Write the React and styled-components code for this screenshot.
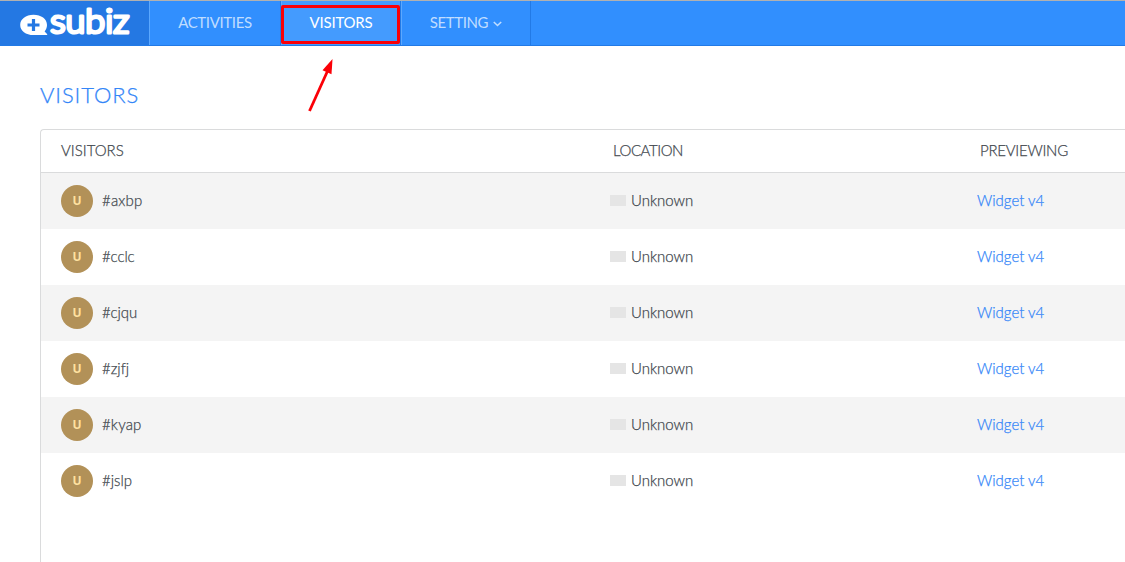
import React from "react";
import styled, { createGlobalStyle } from "styled-components";

const GlobalStyle = createGlobalStyle`
  * { box-sizing: border-box; }
  html, body { margin: 0; height: 100%; overflow: hidden; background: #fff; }
  body {
    font-family: Lato, "Noto Sans", sans-serif;
    font-size: 15px;
    font-weight: 300;
    font-variant-ligatures: none;
    color: #43494f;
  }
`;

const Page = styled.div`
  position: relative;
  height: 562px;
  width: 100%;
  overflow: hidden;
  display: flex;
  flex-direction: column;
`;

const TopBar = styled.header`
  flex: none;
  display: flex;
  height: 46px;
  background: #318ffe;
  border-top: 1px solid #b1b1b1;
  border-bottom: 1px solid #227ae6;
`;

const Brand = styled.div`
  width: 149px;
  background: #2478e3;
`;

const NavItem = styled.a`
  display: flex;
  justify-content: center;
  width: ${(p) => p.$width}px;
  padding-top: 11px;
  line-height: 20px;
  font-weight: 400;
  color: ${(p) => (p.$active ? "#fff" : "#c0ddff")};
  background: ${(p) => (p.$active ? "#449bfe" : "transparent")};
  border-left: 1px solid #5ba8ff;
  border-right: 1px solid #227ae6;
`;

const Label = styled.span`
  white-space: nowrap;
  letter-spacing: ${(p) => p.$track || 0}px;
`;

const Chevron = styled.svg`
  margin: 8px 0 0 5px;
`;

const Content = styled.main`
  flex: 1;
  display: flex;
  flex-direction: column;
  padding: 34px 0 0 40px;
  -webkit-text-stroke: 0.25px currentColor;
`;

const Title = styled.h1`
  margin: 0 0 19px;
  height: 30px;
  line-height: 30px;
  font-size: 22px;
  font-weight: 300;
  color: #3486f8;
`;

const Table = styled.section`
  flex: 1;
  border: 1px solid #dadbdc;
  border-width: 1px 0 0 1px;
  border-radius: 4px 0 0 0;
`;

const Row = styled.div`
  display: grid;
  grid-template-columns: 549px 367px 1fr;
  align-items: center;
  height: 56px;
  padding-left: 20px;
  background: ${(p) => (p.$shaded ? "#f4f4f4" : "#fff")};
`;

const HeadRow = styled(Row)`
  height: 43px;
  grid-template-columns: 552px 367px 1fr;
  padding-bottom: 2px;
  background: transparent;
  border-bottom: 1px solid #dadbdc;
`;

const Cell = styled.div`
  display: flex;
  align-items: center;
`;

const CellText = styled(Label)`
  padding-bottom: 2px;
`;

const Avatar = styled.span`
  width: 32px;
  height: 32px;
  margin-right: 9px;
  border-radius: 50%;
  background: #b29158;
  color: #ffe1a0;
  font-family: "Open Sans", sans-serif;
  font-size: 12px;
  font-weight: 700;
  line-height: 32px;
  text-align: center;
  -webkit-text-stroke: 0;
`;

const Flag = styled.span`
  width: 16px;
  height: 11px;
  margin-right: 5px;
  margin-bottom: 1px;
  background: #e5e5e5;
`;

const WidgetLink = styled.a`
  display: flex;
  color: #3486f8;
`;

const Highlight = styled.div`
  position: absolute;
  left: 281px;
  top: 5px;
  width: 119px;
  height: 39px;
  border: 3px solid #fb0007;
  border-radius: 2px;
`;

const Arrow = styled.svg`
  position: absolute;
  left: 300px;
  top: 54px;
`;

const visitors = [
  ["#axbp", 0.2],
  ["#cclc", -0.1],
  ["#cjqu", -0.1],
  ["#zjfj", 0],
  ["#kyap", 0.15],
  ["#jslp", 0],
];

function Logo() {
  return (
    <svg width="149" height="44" viewBox="0 1 149 44">
      <path d="M33.500 14.700c-7.700 0-13.300 4.300-13.300 10.200S25.800 35 33.500 35H46.500c1 0 1-.8.300-1.300l-2.200-2.200c1.500-1.800 2.400-4 2.400-6.500 0-6.100-5.800-10.300-13.500-10.300z" fill="#fff" />
      <path d="M33.500 19v12M27.500 25h12" stroke="#2478e3" strokeWidth="3.200" />
      <text x="50.200" y="33.300" textLength="79" lengthAdjust="spacingAndGlyphs" fontFamily="Lato, sans-serif" fontWeight="300" fontSize="33" fill="#fff" stroke="#fff" strokeWidth="3.200" strokeLinejoin="round">subiz</text>
    </svg>
  );
}

export default function App() {
  return (
    <Page>
      <GlobalStyle />
      <TopBar>
        <Brand><Logo /></Brand>
        <NavItem $width={132}><Label $track={-0.35}>ACTIVITIES</Label></NavItem>
        <NavItem $width={120} $active><Label $track={-0.2}>VISITORS</Label></NavItem>
        <NavItem $width={130}>
          <Label $track={-0.4}>SETTING</Label>
          <Chevron width="9" height="8" viewBox="0 0 9 8" fill="none" stroke="currentColor" strokeWidth="1.600">
            <path d="M.8 2l3.700 3.500L8.200 2" />
          </Chevron>
        </NavItem>
      </TopBar>
      <Content>
        <Title><Label $track={0.9}>VISITORS</Label></Title>
        <Table>
          <HeadRow>
            <Cell><Label>VISITORS</Label></Cell>
            <Cell><Label $track={-0.45}>LOCATION</Label></Cell>
            <Cell><Label $track={-0.25}>PREVIEWING</Label></Cell>
          </HeadRow>
          {visitors.map(([name, track], i) => (
            <Row key={name} $shaded={i % 2 === 0}>
              <Cell><Avatar>U</Avatar><CellText $track={track}>{name}</CellText></Cell>
              <Cell><Flag /><CellText>Unknown</CellText></Cell>
              <Cell><WidgetLink><CellText>Widget v4</CellText></WidgetLink></Cell>
            </Row>
          ))}
        </Table>
      </Content>
      <Highlight />
      <Arrow width="40" height="62" viewBox="300 54 40 62">
        <path d="M309.500 111L328 70" stroke="#fb0007" strokeWidth="2.800" />
        <path d="M332.500 59l-10 11.300 9 4z" fill="#fb0007" />
      </Arrow>
    </Page>
  );
}
